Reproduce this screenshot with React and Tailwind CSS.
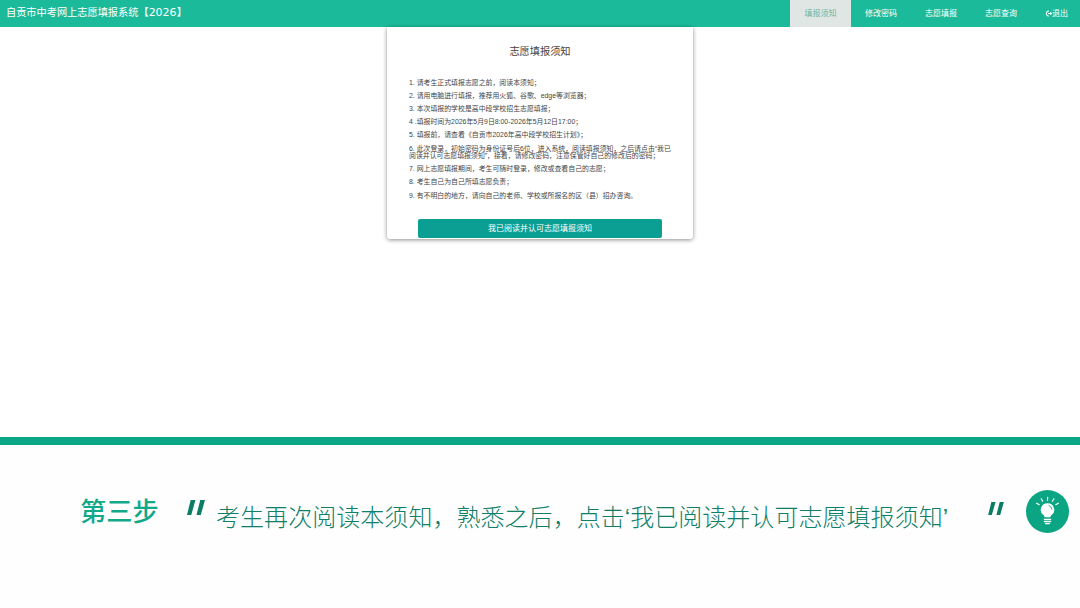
import React from 'react';

const CJK = "font-['Liberation_Sans','Noto_Sans_CJK_SC',sans-serif]";

const navItems = ['修改密码', '志愿填报', '志愿查询'];

const rules = [
  '1. 请考生正式填报志愿之前，阅读本须知；',
  '2. 请用电脑进行填报，推荐用火狐、谷歌、edge等浏览器；',
  '3. 本次填报的学校是高中段学校招生志愿填报；',
  '4 .填报时间为2026年5月9日8:00-2026年5月12日17:00；',
  '5. 填报前，请查看《自贡市2026年高中段学校招生计划》；',
  '6. 此次登录，初始密码为身份证号后6位，进入系统，阅读填报须知，之后请点击“我已阅读并认可志愿填报须知”，接着，请修改密码，注意保管好自己的修改后的密码；',
  '7. 网上志愿填报期间，考生可随时登录，修改或查看自己的志愿；',
  '8. 考生自己为自己所填志愿负责；',
  '9. 有不明白的地方，请向自己的老师、学校或所报名的区（县）招办咨询。',
];

const QuoteMark = ({ className }) => (
  <svg viewBox="0 0 17 14" className={className} fill="#0b7d63">
    <path d="M3.5 0H8L4 14H0Z" />
    <path d="M12.5 0H17L13 14H9Z" />
  </svg>
);

const Bulb = () => (
  <svg viewBox="0 0 44 44" className="w-[43px] h-[43px]" fill="none">
    <g stroke="#ffffff" strokeWidth="1.2" strokeLinecap="round">
      <path d="M13.5 15l-2.6-1.5" />
      <path d="M17 11.5l-1.4-2.6" />
      <path d="M22 10.5l.2-3" />
      <path d="M27 11.5l1.6-2.6" />
      <path d="M30.5 15l2.6-1.5" />
    </g>
    <path d="M22 13.5a6.8 6.8 0 0 0-4.2 12.2c.9.7 1.2 1.4 1.3 2.3h5.8c.1-.9.4-1.6 1.3-2.3A6.8 6.8 0 0 0 22 13.5Z" fill="#ffffff" />
    <path d="M23.5 15.8a4.4 4.4 0 0 1 3 3.8" stroke="#0ba584" strokeWidth="0.9" strokeLinecap="round" />
    <path d="M18.8 30h6.4M18.8 32.2h6.4M20 34.4h4" stroke="#ffffff" strokeWidth="1.4" strokeLinecap="round" />
  </svg>
);

const LogoutIcon = () => (
  <svg viewBox="0 0 8 8" className="w-[7px] h-[7px]" fill="none" stroke="#ffffff" strokeWidth="1.2">
    <path d="M4.5 1.1A2.9 2.9 0 1 0 4.5 6.9" />
    <path d="M3.5 4H7.6M6 2.7 7.6 4 6 5.3" />
  </svg>
);

export default function App() {
  return (
    <div className={`w-[1080px] h-[608px] overflow-hidden bg-white flex flex-col ${CJK}`}>
      {/* Top nav */}
      <div className="h-[27px] shrink-0 bg-[#1bba9a] flex items-center justify-between pl-[6px]">
        <div className="text-[10.2px] text-white">
          自贡市中考网上志愿填报系统【<span className="font-['DejaVu_Sans',sans-serif] text-[11px]">2026</span>】
        </div>
        <div className="flex h-full text-[8px] text-white">
          <div className="w-[61px] bg-[#dfe6e3] text-[#6fb5a2] flex items-center justify-center">填报须知</div>
          {navItems.map((item) => (
            <div key={item} className="w-[60px] flex items-center justify-center">
              {item}
            </div>
          ))}
          <div className="w-[49px] flex items-center justify-end pr-[12px]">
            <LogoutIcon />
            <span>退出</span>
          </div>
        </div>
      </div>

      {/* Notice */}
      <div className="h-[410px] shrink-0">
        <div className="w-[306px] h-[212px] mx-auto bg-white rounded-b-[3px] shadow-[0_1px_4px_rgba(0,0,0,0.45)] px-[22px] flex flex-col">
          <h1 className="text-[10.2px] leading-none text-[#444444] text-center mt-[20px]">志愿填报须知</h1>
          <ol className="mt-[21.4px] flex flex-col gap-[5.7px] text-[6.9px] leading-[7.5px] text-[#444444]">
            {rules.map((rule) => (
              <li key={rule}>{rule}</li>
            ))}
          </ol>
          <button className="mt-auto mb-[1px] mx-[9px] h-[19px] rounded-[2px] bg-[#0b9f94] text-white text-[8px] flex items-center justify-center">
            我已阅读并认可志愿填报须知
          </button>
        </div>
      </div>

      {/* Step caption */}
      <div className="h-[8px] shrink-0 bg-[#0aa787]" />
      <div className="flex-1 flex items-start pl-[80px] pt-[46px] bg-[#fefefe]">
        <div className="text-[26.3px] leading-[40px] font-medium text-[#12a98a] mt-[1px] w-[107px] shrink-0">第三步</div>
        <QuoteMark className="w-[18px] h-[15px] mt-[9px] shrink-0" />
        <div className="text-[24.05px] leading-[40px] font-light text-[#0f7f68] ml-[11px] mt-[7px] w-[772px] shrink-0 whitespace-nowrap">
          考生再次阅读本须知，熟悉之后，点击‘我已阅读并认可志愿填报须知’
        </div>
        <QuoteMark className="w-[16px] h-[13px] mt-[11px] shrink-0" />
        <div className="w-[43px] h-[43px] rounded-full bg-[#0ba584] ml-[22px] mt-[-1px] shrink-0">
          <Bulb />
        </div>
      </div>
    </div>
  );
}
